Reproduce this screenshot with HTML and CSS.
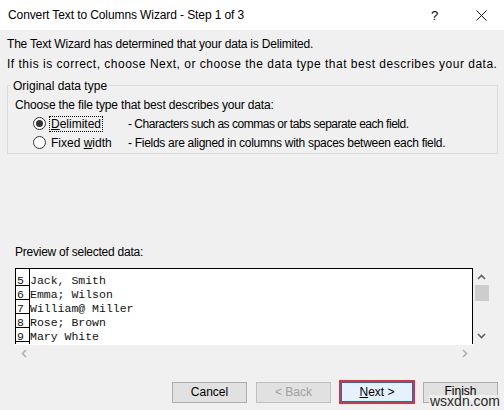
FILE: index.html
```html
<!DOCTYPE html>
<html>
<head>
  <meta charset="utf-8">
  <link rel="stylesheet" href="styles.css">
</head>
<body>
  <div class="dialog">
    <div class="titlebar">
      <span class="title">Convert Text to Columns Wizard - Step 1 of 3</span>
      <span class="help">?</span>
      <span class="close">
        <svg width="11" height="11" viewBox="0 0 11 11"><path d="M0.5 0.5 L10.5 10.5 M10.5 0.5 L0.5 10.5" stroke="#1a1a1a" stroke-width="1" fill="none"/></svg>
      </span>
    </div>

    <div class="content">
      <p class="intro first">The Text Wizard has determined that your data is Delimited.</p>
      <p class="intro second">If this is correct, choose Next, or choose the data type that best describes your data.</p>

      <div class="group">
        <div class="legend">Original data type</div>
        <div class="prompt">Choose the file type that best describes your data:</div>
        <div class="option">
          <span class="radio checked"></span>
          <span class="opt-name"><span class="focus"><u>D</u>elimited</span></span>
          <span class="opt-desc desc-delim">- Characters such as commas or tabs separate each field.</span>
        </div>
        <div class="option">
          <span class="radio"></span>
          <span class="opt-name"><span class="nofocus">Fixed <u>w</u>idth</span></span>
          <span class="opt-desc desc-fixed">- Fields are aligned in columns with spaces between each field.</span>
        </div>
      </div>

      <div class="preview-label">Preview of selected data:</div>
      <div class="preview">
        <div class="preview-main">
          <div class="grid">
            <div class="line-nums">
              <div class="num">5</div>
              <div class="num">6</div>
              <div class="num">7</div>
              <div class="num">8</div>
              <div class="num">9</div>
            </div>
            <div class="data">
              <div class="row">Jack, Smith</div>
              <div class="row">Emma; Wilson</div>
              <div class="row">William@ Miller</div>
              <div class="row">Rose; Brown</div>
              <div class="row">Mary White</div>
            </div>
          </div>
          <div class="vscroll">
            <div class="arrow">
              <svg width="9" height="6" viewBox="0 0 9 6"><path d="M1 5 L4.5 1.5 L8 5" stroke="#606060" stroke-width="1.6" fill="none"/></svg>
            </div>
            <div class="thumb"></div>
            <div class="track"></div>
            <div class="arrow">
              <svg width="9" height="6" viewBox="0 0 9 6"><path d="M1 1 L4.5 4.5 L8 1" stroke="#606060" stroke-width="1.6" fill="none"/></svg>
            </div>
          </div>
        </div>
        <div class="hscroll">
          <div class="arrow">
            <svg width="6" height="9" viewBox="0 0 6 9"><path d="M5 1 L1.5 4.5 L5 8" stroke="#b0b0b0" stroke-width="1.6" fill="none"/></svg>
          </div>
          <div class="track"></div>
          <div class="arrow">
            <svg width="6" height="9" viewBox="0 0 6 9"><path d="M1 1 L4.5 4.5 L1 8" stroke="#b0b0b0" stroke-width="1.6" fill="none"/></svg>
          </div>
        </div>
      </div>

      <div class="buttons">
        <button class="btn">Cancel</button>
        <button class="btn disabled">&lt; Back</button>
        <span class="highlight"><button class="btn default"><u>N</u>ext &gt;</button></span>
        <span class="finish-wrap">
          <button class="btn finish">Finish</button>
          <span class="stamp">wsxdn.com</span>
        </span>
      </div>
    </div>
  </div>
</body>
</html>
```

FILE: styles.css
```css
body {
  margin: 0;
  width: 504px;
  height: 410px;
  overflow: hidden;
  font-family: "Segoe UI", "Liberation Sans", Arial, sans-serif;
  font-size: 12px;
  color: #000;
  background: #f0f0f0;
}

.dialog {
  display: flex;
  flex-direction: column;
  height: 410px;
}

/* window caption */
.titlebar {
  display: flex;
  align-items: center;
  height: 30px;
  background: #fff;
  padding-left: 8px;
}

.title {
  flex: 1;
  color: #000;
  letter-spacing: -0.1px;
}

.help {
  width: 10px;
  margin-right: 35px;
  font-size: 13px;
}

.close {
  display: flex;
  width: 11px;
  margin-right: 17px;
}

.content {
  flex: 1;
  display: flex;
  flex-direction: column;
}

.intro {
  margin: 0 0 0 7px;
  line-height: 20px;
  white-space: nowrap;
}

.intro.first {
  margin-top: 4px;
  letter-spacing: -0.2px;
}

.intro.second {
  letter-spacing: 0.5px;
}

/* group box */
.group {
  margin: 11px 6px 0 7px;
  border: 1px solid #dcdcdc;
  height: 67px;
}

.legend {
  width: fit-content;
  margin: -8px 0 0 3px;
  padding: 0 2px;
  line-height: 16px;
  background: #f0f0f0;
}

.prompt {
  margin-top: 3px;
  padding-left: 7px;
  line-height: 17px;
  letter-spacing: -0.16px;
}

.option {
  display: flex;
  align-items: center;
  height: 19px;
  padding-left: 25px;
}

.radio {
  width: 11px;
  height: 11px;
  border: 1px solid #333;
  border-radius: 50%;
  background: #fff;
  position: relative;
  margin-right: 3px;
}

.radio.checked::after {
  content: "";
  position: absolute;
  left: 2px;
  top: 2px;
  width: 7px;
  height: 7px;
  border-radius: 50%;
  background: #333;
}

.opt-name {
  width: 79px;
}

.focus {
  border: 1px dotted #000;
  padding: 0 1px;
}

.nofocus {
  padding: 0 2px;
}

.desc-delim {
  letter-spacing: -0.48px;
}

.desc-fixed {
  letter-spacing: -0.29px;
}

/* preview list */
.preview-label {
  margin: 88px 0 0 15px;
  line-height: 20px;
  letter-spacing: -0.24px;
}

.preview {
  margin: 6px 0 0 15px;
  width: 475px;
}

.preview-main {
  display: flex;
  height: 76px;
}

.grid {
  flex: 1;
  display: flex;
  background: #fff;
  border-top: 1px solid #000;
  border-left: 1px solid #000;
  border-right: 1px solid #000;
  font-family: "Liberation Mono", "Courier New", monospace;
  font-size: 11.5px;
  color: #111;
}

.line-nums {
  width: 13px;
  border-right: 1px solid #000;
  padding-top: 3px;
}

.num {
  height: 12px;
  line-height: 15px;
  padding: 1px 0 0 1px;
  border-bottom: 1px solid #000;
}

.data {
  padding-top: 4px;
}

.row {
  height: 14px;
  line-height: 16px;
}

.vscroll {
  width: 17px;
  display: flex;
  flex-direction: column;
}

.vscroll .arrow {
  height: 17px;
  display: flex;
  align-items: center;
  justify-content: center;
}

.thumb {
  height: 16px;
  margin: 0 1px 0 2px;
  background: #cdcdcd;
}

.vscroll .track {
  flex: 1;
}

.hscroll {
  display: flex;
  width: 458px;
  height: 16px;
  border-top: 1px solid #fff;
}

.hscroll .arrow {
  width: 17px;
  display: flex;
  align-items: center;
  justify-content: center;
}

.hscroll .track {
  flex: 1;
}

/* dialog buttons */
.buttons {
  display: flex;
  align-items: center;
  margin: 19px 0 0 172px;
}

.btn {
  width: 75px;
  height: 21px;
  padding: 0;
  border: 1px solid #adadad;
  background: #e1e1e1;
  font-family: inherit;
  font-size: 12px;
  color: #000;
}

.btn + .btn {
  margin-left: 9px;
}

.btn.disabled {
  color: #a0a0a0;
  background: #e1e1e1;
  border-color: #bfbfbf;
}

.highlight {
  display: flex;
  margin-left: 8px;
  border: 2px solid #e0303a;
  padding: 0;
}

.btn.default {
  width: 72px;
  height: 20px;
  background: #e5f1fb;
  border: 1px solid #0078d7;
}

.finish-wrap {
  position: relative;
  display: flex;
  margin-left: 8px;
}

.btn.finish {
  padding-bottom: 2px;
}

.stamp {
  position: absolute;
  left: 6px;
  top: 13px;
  font-family: "Liberation Sans", Arial, sans-serif;
  font-size: 14px;
  color: #2a2a2a;
  background: rgba(240, 240, 240, 0.85);
  line-height: 12px;
  padding: 0 1px;
}
```
